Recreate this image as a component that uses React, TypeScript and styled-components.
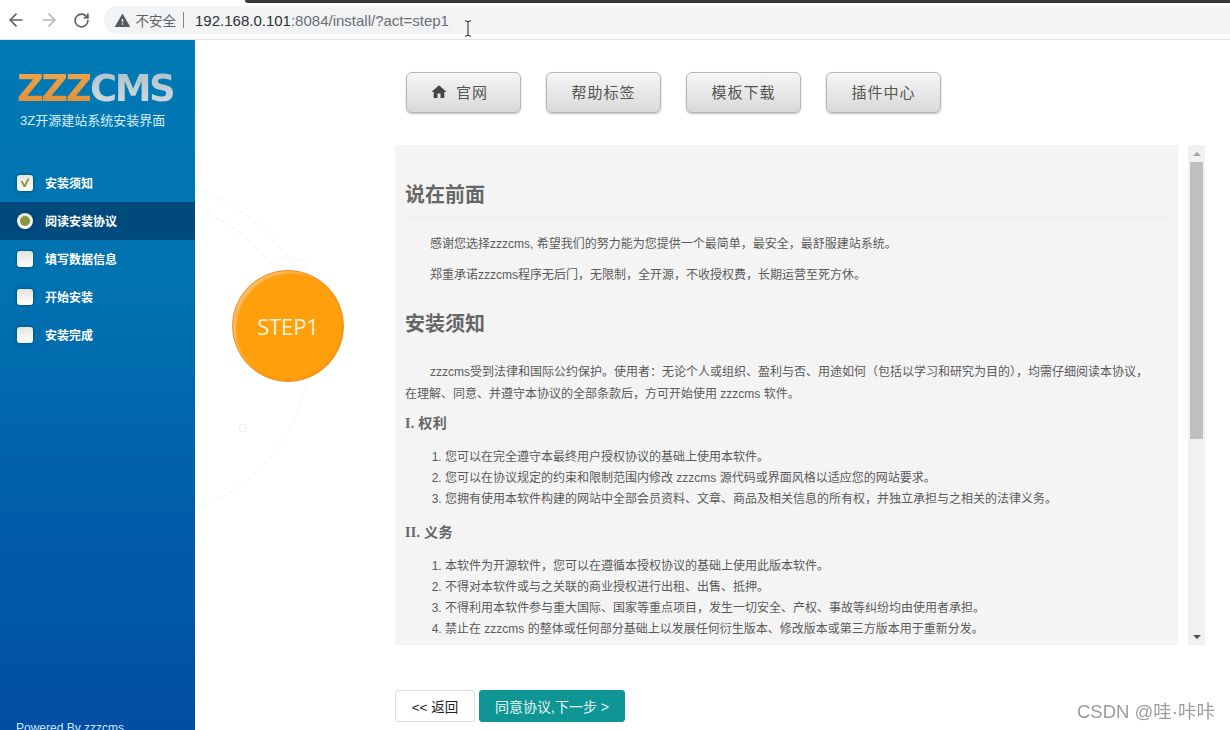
import * as React from 'react';
import styled, { createGlobalStyle } from 'styled-components';
import { ArrowLeft, ArrowRight, RotateCw } from 'lucide-react';
import { MdHome, MdWarning } from 'react-icons/md';

const sans = '"Liberation Sans", "Noto Sans CJK SC", sans-serif';

const GlobalStyle = createGlobalStyle`
	html, body {
		margin: 0;
		padding: 0;
		height: 730px;
		overflow: hidden;
		background: #fff;
		font-family: ${sans};
	}
`;

const Page = styled.div`
	position: relative;
	width: 1230px;
	height: 730px;
	overflow: hidden;
	display: flex;
	flex-direction: column;
`;

/* browser chrome */
const BrowserBar = styled.header`
	position: relative;
	flex: none;
	height: 40px;
	box-sizing: border-box;
	display: flex;
	align-items: center;
	padding: 1px 0 0 6px;
	background: #fff;
	border-bottom: 1px solid #dfe1e3;
`;

const TopStrip = styled.div`
	position: absolute;
	top: 0;
	left: 245px;
	right: 0;
	height: 3px;
	background: #35363a;
	border-bottom-left-radius: 4px;
`;

const NavIcon = styled.span<{ $faded?: boolean }>`
	width: 20px;
	height: 20px;
	margin-right: 12.5px;
	display: flex;
	align-items: center;
	justify-content: center;
	color: ${(p) => (p.$faded ? '#b4b6b9' : '#5c5f63')};
`;

const Omnibox = styled.div`
	flex: 1;
	height: 28px;
	margin: 0 -20px 0 0;
	padding-left: 10px;
	display: flex;
	align-items: center;
	background: #f1f3f4;
	border-radius: 14px 0 0 14px;
	font-size: 15px;
	color: #303134;
`;

const Insecure = styled.span`
	display: flex;
	align-items: center;
	gap: 5px;
	color: #5f6368;
	font-size: 13.5px;
`;

const Separator = styled.span`
	width: 1px;
	height: 16px;
	margin: 0 11px 0 7px;
	background: #888;
`;

const UrlRest = styled.span`
	color: #6b6e72;
`;

const TextCursor = styled.svg`
	position: absolute;
	left: 464px;
	top: 20px;
`;

/* page body */
const Body = styled.div`
	flex: 1;
	min-height: 0;
	display: flex;
`;

const Sidebar = styled.aside`
	flex: none;
	width: 195px;
	height: 700px;
	overflow: hidden;
	background: linear-gradient(180deg, #017ab4 0%, #0172b0 35%, #0159a8 75%, #014ea4 100%);
	color: #fff;
`;

const Logo = styled.div`
	height: 36px;
	margin: 31px 0 0 17px;
	font: bold 37px/36px "DejaVu Sans", sans-serif;
	letter-spacing: -2.5px;
	white-space: nowrap;
`;

const LogoPart = styled.span<{ $from: string; $to: string }>`
	background: linear-gradient(180deg, ${(p) => p.$from}, ${(p) => p.$to});
	-webkit-background-clip: text;
	background-clip: text;
	color: transparent;
`;

const Tagline = styled.div`
	margin: 5px 0 0 20px;
	font-size: 13px;
	line-height: 18px;
	color: #d9eef8;
`;

const StepList = styled.ul`
	list-style: none;
	margin: 34px 0 0;
	padding: 0;
`;

const StepItem = styled.li<{ $active?: boolean }>`
	height: 38px;
	box-sizing: border-box;
	padding: 0 0 1px 17px;
	display: flex;
	align-items: center;
	gap: 12px;
	font-size: 12px;
	font-weight: bold;
	background: ${(p) => (p.$active ? '#014a7e' : 'transparent')};
`;

const Tick = styled.span<{ $round?: boolean }>`
	width: 16px;
	height: 16px;
	display: flex;
	align-items: center;
	justify-content: center;
	background: linear-gradient(180deg, #e4e4dc, #fff);
	border-radius: ${(p) => (p.$round ? '50%' : '3px')};
	box-shadow: 0 0 3px rgba(0, 0, 0, 0.45);
`;

const Dot = styled.span`
	width: 10px;
	height: 10px;
	border-radius: 50%;
	background: #86963a;
`;

const Powered = styled.div`
	margin: 367px 0 0 16px;
	font-size: 12px;
	color: #cfe7f5;
`;

const Main = styled.main`
	position: relative;
	flex: 1;
	min-width: 0;
	display: flex;
`;

const Rings = styled.svg`
	position: absolute;
	left: 0;
	top: 130px;
`;

const StepColumn = styled.div`
	position: relative;
	flex: none;
	width: 200px;
	box-sizing: border-box;
	padding: 230px 0 0 37px;
`;

const StepCircle = styled.div`
	width: 112px;
	height: 112px;
	box-sizing: border-box;
	display: flex;
	align-items: center;
	justify-content: center;
	border-radius: 50%;
	background: #ff9f0c;
	border: 1px solid #f0932a;
	box-shadow: inset 4px 3px 2px -1px #ffbb60, inset -1px -1px 2px #f59310;
	color: #fff3dc;
	font: 22px "Open Sans", sans-serif;
	letter-spacing: -0.1px;
`;

const Content = styled.div`
	flex: 1;
	min-width: 0;
	display: flex;
	flex-direction: column;
`;

const LinkRow = styled.nav`
	display: flex;
	gap: 25px;
	padding: 32px 0 0 11px;
`;

const LinkButton = styled.a<{ $withIcon?: boolean }>`
	width: 115px;
	height: 41px;
	box-sizing: border-box;
	display: flex;
	align-items: center;
	justify-content: center;
	gap: 8px;
	padding: 0 ${(p) => (p.$withIcon ? '9px' : '0')} 2px 0;
	border: 1px solid #b5b5b5;
	border-radius: 6px;
	background: linear-gradient(180deg, #f6f6f6, #d9d9d9);
	box-shadow: 0 1px 2px rgba(0, 0, 0, 0.25);
	font-size: 15px;
	letter-spacing: 1px;
	color: #555;
`;

const ReaderRow = styled.div`
	display: flex;
	margin-top: 32px;
	height: 500px;
`;

const Agreement = styled.article`
	width: 783px;
	box-sizing: border-box;
	padding: 0 10px;
	overflow: hidden;
	background: #f4f4f4;
	color: #5a5a5a;
	font-size: 12px;
`;

const Heading = styled.h2<{ $first?: boolean }>`
	margin: ${(p) => (p.$first ? '37px 0 15px' : '25px 0 22px')};
	padding-bottom: ${(p) => (p.$first ? '8px' : '0')};
	border-bottom: 1px solid ${(p) => (p.$first ? '#ececec' : 'transparent')};
	font-size: 20px;
	line-height: 27px;
	font-weight: bold;
	color: #666;
`;

const Para = styled.p`
	margin: 9px 0 8px;
	padding-right: 10px;
	text-indent: 25px;
	line-height: 22px;
`;

const SubHeading = styled.h3`
	margin: 8px 0 0;
	font: bold 14px/21px "Liberation Serif", "Noto Sans CJK SC", serif;
	letter-spacing: 0.3px;
	color: #666;
`;

const Terms = styled.ol`
	margin: 13px 0 12px;
	padding: 0 0 0 40px;
	line-height: 21px;
`;

const Scrollbar = styled.div`
	width: 17px;
	margin-left: 10px;
	display: flex;
	flex-direction: column;
	align-items: center;
	background: #f1f1f1;
`;

const ScrollArrow = styled.div<{ $down?: boolean }>`
	flex: none;
	height: 17px;
	display: flex;
	align-items: center;
	justify-content: center;
	&::before {
		content: '';
		border-left: 4px solid transparent;
		border-right: 4px solid transparent;
		${(p) => (p.$down ? 'border-top: 4px solid #505050;' : 'border-bottom: 4px solid #a3a3a3;')}
	}
`;

const ScrollThumb = styled.div`
	flex: none;
	width: 13px;
	height: 277px;
	background: #bfbfbf;
`;

const ScrollTrack = styled.div`
	flex: 1;
`;

const Actions = styled.div`
	display: flex;
	gap: 4px;
	margin-top: 45px;
`;

const ActionButton = styled.button<{ $primary?: boolean }>`
	height: 32px;
	width: ${(p) => (p.$primary ? '146px' : '80px')};
	padding: 0;
	border: 1px solid ${(p) => (p.$primary ? '#0e9594' : '#dcdcdc')};
	border-radius: 3px;
	background: ${(p) => (p.$primary ? '#0e9594' : '#fff')};
	color: ${(p) => (p.$primary ? '#e6f5f5' : '#222')};
	font-family: ${sans};
	font-size: ${(p) => (p.$primary ? '14px' : '13.5px')};
`;

const Watermark = styled.div`
	position: absolute;
	right: 15px;
	bottom: 7px;
	font-size: 18.5px;
	color: #8a8a8a;
	opacity: 0.85;
`;

const steps = [
	{ label: '安装须知', kind: 'done' },
	{ label: '阅读安装协议', kind: 'current' },
	{ label: '填写数据信息', kind: 'todo' },
	{ label: '开始安装', kind: 'todo' },
	{ label: '安装完成', kind: 'todo' }
];

const links = ['帮助标签', '模板下载', '插件中心'];

const rights = [
	'您可以在完全遵守本最终用户授权协议的基础上使用本软件。',
	'您可以在协议规定的约束和限制范围内修改 zzzcms 源代码或界面风格以适应您的网站要求。',
	'您拥有使用本软件构建的网站中全部会员资料、文章、商品及相关信息的所有权，并独立承担与之相关的法律义务。'
];

const duties = [
	'本软件为开源软件，您可以在遵循本授权协议的基础上使用此版本软件。',
	'不得对本软件或与之关联的商业授权进行出租、出售、抵押。',
	'不得利用本软件参与重大国际、国家等重点项目，发生一切安全、产权、事故等纠纷均由使用者承担。',
	'禁止在 zzzcms 的整体或任何部分基础上以发展任何衍生版本、修改版本或第三方版本用于重新分发。'
];

function App() {
	return (
		<Page>
			<GlobalStyle />
			<BrowserBar>
				<TopStrip />
				<NavIcon><ArrowLeft size={20} strokeWidth={2} /></NavIcon>
				<NavIcon $faded><ArrowRight size={20} strokeWidth={2} /></NavIcon>
				<NavIcon><RotateCw size={17} strokeWidth={2.4} /></NavIcon>
				<Omnibox>
					<Insecure><MdWarning size={17} color="#55585c" />不安全</Insecure>
					<Separator />
					192.168.0.101<UrlRest>:8084/install/?act=step1</UrlRest>
				</Omnibox>
				<TextCursor width="8" height="17" viewBox="0 0 8 17">
					<path d="M1 1h2l1 1 1-1h2M4 2v13M1 16h2l1-1 1 1h2" fill="none" stroke="#222" strokeWidth="1" />
				</TextCursor>
			</BrowserBar>
			<Body>
				<Sidebar>
					<Logo>
						<LogoPart $from="#f0a850" $to="#e08a34">ZZZ</LogoPart>
						<LogoPart $from="#a9bfcc" $to="#d8dde0">CMS</LogoPart>
					</Logo>
					<Tagline>3Z开源建站系统安装界面</Tagline>
					<StepList>
						{steps.map((s) => (
							<StepItem key={s.label} $active={s.kind === 'current'}>
								<Tick $round={s.kind === 'current'}>
									{s.kind === 'done' && (
										<svg width="12" height="12" viewBox="0 0 12 12">
											<path d="M1.5 4l2 0 2 3.5 3-6 2 0-4 8.5-1.8 0z" fill="#86963a" />
										</svg>
									)}
									{s.kind === 'current' && <Dot />}
								</Tick>
								{s.label}
							</StepItem>
						))}
					</StepList>
					<Powered>Powered By zzzcms</Powered>
				</Sidebar>
				<Main>
					<Rings width="200" height="360" viewBox="0 0 200 360" fill="none" stroke="#f2f5f7">
						<path d="M0 18C50 36 90 70 108 120" />
						<path d="M0 40C40 50 75 85 92 122" />
						<path d="M0 338C55 320 95 280 112 212" stroke="#f5f7f9" />
						<circle cx="105" cy="96" r="7" />
						<circle cx="48" cy="258" r="4" stroke="#eeeeee" />
					</Rings>
					<StepColumn>
						<StepCircle>STEP1</StepCircle>
					</StepColumn>
					<Content>
						<LinkRow>
							<LinkButton $withIcon><MdHome size={18} color="#444" />官网</LinkButton>
							{links.map((l) => <LinkButton key={l}>{l}</LinkButton>)}
						</LinkRow>
						<ReaderRow>
							<Agreement>
								<Heading $first>说在前面</Heading>
								<Para>感谢您选择zzzcms, 希望我们的努力能为您提供一个最简单，最安全，最舒服建站系统。</Para>
								<Para>郑重承诺zzzcms程序无后门，无限制，全开源，不收授权费，长期运营至死方休。</Para>
								<Heading>安装须知</Heading>
								<Para>zzzcms受到法律和国际公约保护。使用者：无论个人或组织、盈利与否、用途如何（包括以学习和研究为目的），均需仔细阅读本协议，在理解、同意、并遵守本协议的全部条款后，方可开始使用 zzzcms 软件。</Para>
								<SubHeading>I. 权利</SubHeading>
								<Terms>{rights.map((t) => <li key={t}>{t}</li>)}</Terms>
								<SubHeading>II. 义务</SubHeading>
								<Terms>{duties.map((t) => <li key={t}>{t}</li>)}</Terms>
							</Agreement>
							<Scrollbar>
								<ScrollArrow />
								<ScrollThumb />
								<ScrollTrack />
								<ScrollArrow $down />
							</Scrollbar>
						</ReaderRow>
						<Actions>
							<ActionButton>&lt;&lt; 返回</ActionButton>
							<ActionButton $primary>同意协议,下一步 &gt;</ActionButton>
						</Actions>
					</Content>
				</Main>
			</Body>
			<Watermark>CSDN @哇·咔咔</Watermark>
		</Page>
	);
}

export default App;
